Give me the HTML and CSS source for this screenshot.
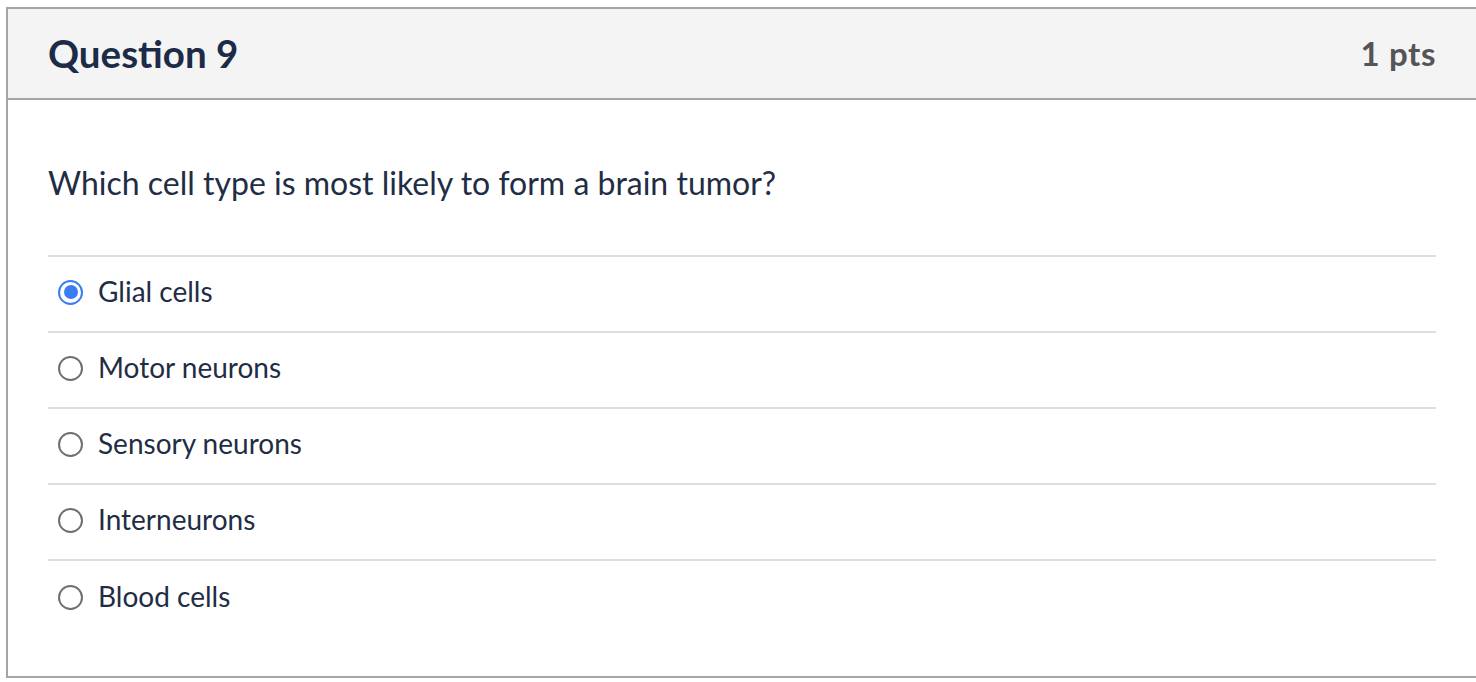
FILE: index.html
```html
<!DOCTYPE html>
<html>
<head>
<meta charset="utf-8">
<link rel="stylesheet" href="styles.css">
</head>
<body>
<div class="question">
  <div class="header">
    <h2 class="title">Question 9</h2>
    <span class="pts">1 pts</span>
  </div>
  <div class="content">
    <p class="text">Which cell type is most likely to form a brain tumor?</p>
    <div class="answers">
      <label class="answer"><span class="radio checked"></span><span class="label">Glial cells</span></label>
      <label class="answer"><span class="radio"></span><span class="label">Motor neurons</span></label>
      <label class="answer"><span class="radio"></span><span class="label">Sensory neurons</span></label>
      <label class="answer"><span class="radio"></span><span class="label">Interneurons</span></label>
      <label class="answer"><span class="radio"></span><span class="label">Blood cells</span></label>
    </div>
  </div>
</div>
</body>
</html>
```
FILE: styles.css
```css
html, body { margin: 0; padding: 0; background: #fff; }
body { padding: 7px 0 0 6px; font-family: Lato, "Open Sans", sans-serif; color: #1f2d45; overflow: hidden; }
.question {
  border: 2px solid #a5a5a5;
  border-right: none;
  height: 671px;
  box-sizing: border-box;
}
.header {
  background: #f4f4f4;
  border-bottom: 2px solid #a5a5a5;
  height: 91px;
  box-sizing: border-box;
  display: flex;
  align-items: center;
  justify-content: space-between;
  padding: 0 40px 1px 40px;
}
.title { margin: 0; font-size: 38.5px; font-weight: 700; color: #1c2b47; }
.pts { font-size: 33px; font-weight: 700; color: #555; letter-spacing: 0.6px; }
.content { padding: 0 40px 0 40px; }
.text { margin: 0; padding-top: 63px; box-sizing: border-box; height: 155px; font-size: 32px; line-height: 40px; color: #1f2d45; }
.answers { border-top: 2px solid #dedede; }
.answer {
  display: flex;
  align-items: center;
  height: 76px;
  box-sizing: border-box;
  border-bottom: 2px solid #dedede;
  font-size: 28px;
  color: #1f2d45;
  padding-left: 10px;
  padding-bottom: 6px;
}
.answer:last-child { border-bottom: none; }
.label { line-height: 1; }
.radio {
  width: 25px; height: 25px;
  box-sizing: border-box;
  border: 2px solid #6f6f6f;
  border-radius: 50%;
  margin-right: 15px;
  flex: none;
  position: relative;
  top: 1px;
}
.radio.checked { border: 2px solid #3a7df2; }
.radio.checked::after {
  content: "";
  position: absolute;
  left: 3.5px; top: 3.5px;
  width: 14px; height: 14px;
  border-radius: 50%;
  background: #3a7df2;
}
```
